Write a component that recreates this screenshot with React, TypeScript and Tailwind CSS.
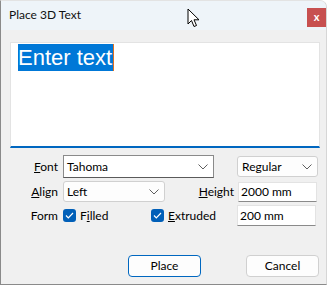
import React from "react";

const Chevron = () => (
  <svg width="10" height="6" viewBox="0 0 10 6" className="shrink-0">
    <polyline points="0.5,0.5 5,5 9.5,0.5" fill="none" stroke="#5f5f5f" strokeWidth="1" />
  </svg>
);

const Check = () => (
  <span className="w-[13px] h-[13px] rounded-[3px] bg-[#005fb8] flex items-center justify-center shrink-0">
    <svg width="9" height="7" viewBox="0 0 9 7">
      <polyline points="1,3.5 3.3,5.8 8,1" fill="none" stroke="white" strokeWidth="1.2" />
    </svg>
  </span>
);

export default function App() {
  const font = { fontFamily: "Lato, 'Noto Sans', sans-serif" };
  return (
    <div className="w-[328px] h-[286px] bg-white relative overflow-hidden text-[12px] text-black" style={font}>
      <div className="w-[327px] h-[285px] border-l border-b border-[#8a8a8a] border-r border-r-[#d6d6d6] border-t border-t-[#e3e3e3] rounded-tr-[7px] bg-[#f0f0f0] flex flex-col overflow-hidden">
        {/* title bar */}
        <div className="h-[29px] bg-[#eef4f9] flex items-start justify-between shrink-0">
          <div className="pl-[8px] pt-[6px] text-[12px] leading-[16px] text-[#111]">Place 3D Text</div>
          <div className="mt-[7px] mr-[0px] w-[19px] h-[19px] bg-[#c75050] flex items-center justify-center text-white text-[11px] font-bold leading-none pb-[2px]">x</div>
        </div>
        {/* text area */}
        <div className="ml-[9px] mt-[12px] w-[310px] h-[106px] bg-white border-l border-t border-r border-[#e3e3e3] border-b-2 border-b-[#0067c0] shrink-0">
          <div className="ml-[7px] mt-[1px] flex">
            <span className="bg-[#0078d7] text-white text-[22px] leading-[27px] pr-[1px] border-r border-r-[#e07020]" style={{ fontFamily: "'Liberation Sans', Arial, sans-serif" }}>
              Enter text
            </span>
          </div>
        </div>
        {/* form rows */}
        <div className="flex flex-col mt-[7px]">
          <div className="flex items-center h-[23px]">
            <div className="w-[57px] text-right"><u>F</u>ont</div>
            <div className="ml-[5px] w-[151px] h-[23px] bg-white border border-[#8a8a8a] border-b-[#5a5a5a] flex items-center justify-between pl-[3px] pr-[5px]">
              <span>Tahoma</span>
              <Chevron />
            </div>
            <div className="ml-[23px] w-[81px] h-[21px] bg-[#fdfdfd] border border-[#d0d0d0] rounded-[3px] flex items-center justify-between pl-[4px] pr-[5px]">
              <span>Regular</span>
              <Chevron />
            </div>
          </div>
          <div className="flex items-center h-[21px] mt-[3px]">
            <div className="w-[57px] text-right"><u>A</u>lign</div>
            <div className="ml-[5px] w-[102px] h-[21px] bg-[#fdfdfd] border border-[#d0d0d0] rounded-[3px] flex items-center justify-between pl-[3px] pr-[5px]">
              <span>Left</span>
              <Chevron />
            </div>
            <div className="w-[69px] text-right"><u>H</u>eight</div>
            <div className="ml-[4px] w-[79px] h-[20px] bg-white border border-[#e3e3e3] border-b-[#8a8a8a] flex items-center pl-[2px]">2000 mm</div>
          </div>
          <div className="flex items-center h-[21px] mt-[3px]">
            <div className="w-[57px] text-right">Form</div>
            <div className="ml-[5px] flex items-center gap-[4px] w-[88px]">
              <Check />
              <span>F<u>i</u>lled</span>
            </div>
            <div className="flex items-center gap-[4px] w-[86px]">
              <Check />
              <span><u>E</u>xtruded</span>
            </div>
            <div className="w-[79px] h-[21px] bg-white border border-[#e3e3e3] border-b-[#8a8a8a] flex items-center pl-[2px]">200 mm</div>
          </div>
        </div>
        {/* buttons */}
        <div className="flex mt-[29px]">
          <div className="ml-[127px] w-[73px] h-[22px] bg-[#fdfdfd] border border-[#0067c0] rounded-[4px] flex items-center justify-center">Place</div>
          <div className="ml-[45px] w-[73px] h-[22px] bg-[#fdfdfd] border border-[#d0d0d0] rounded-[4px] flex items-center justify-center">Cancel</div>
        </div>
      </div>
      {/* mouse cursor */}
      <svg className="absolute left-[187px] top-[8px]" width="14" height="21" viewBox="0 0 14 21">
        <path d="M1,1 L1,16 L4.5,12.5 L7,18.5 L9.5,17.5 L7,11.8 L12,11.8 Z" fill="white" stroke="black" strokeWidth="1" strokeLinejoin="round" />
      </svg>
    </div>
  );
}
